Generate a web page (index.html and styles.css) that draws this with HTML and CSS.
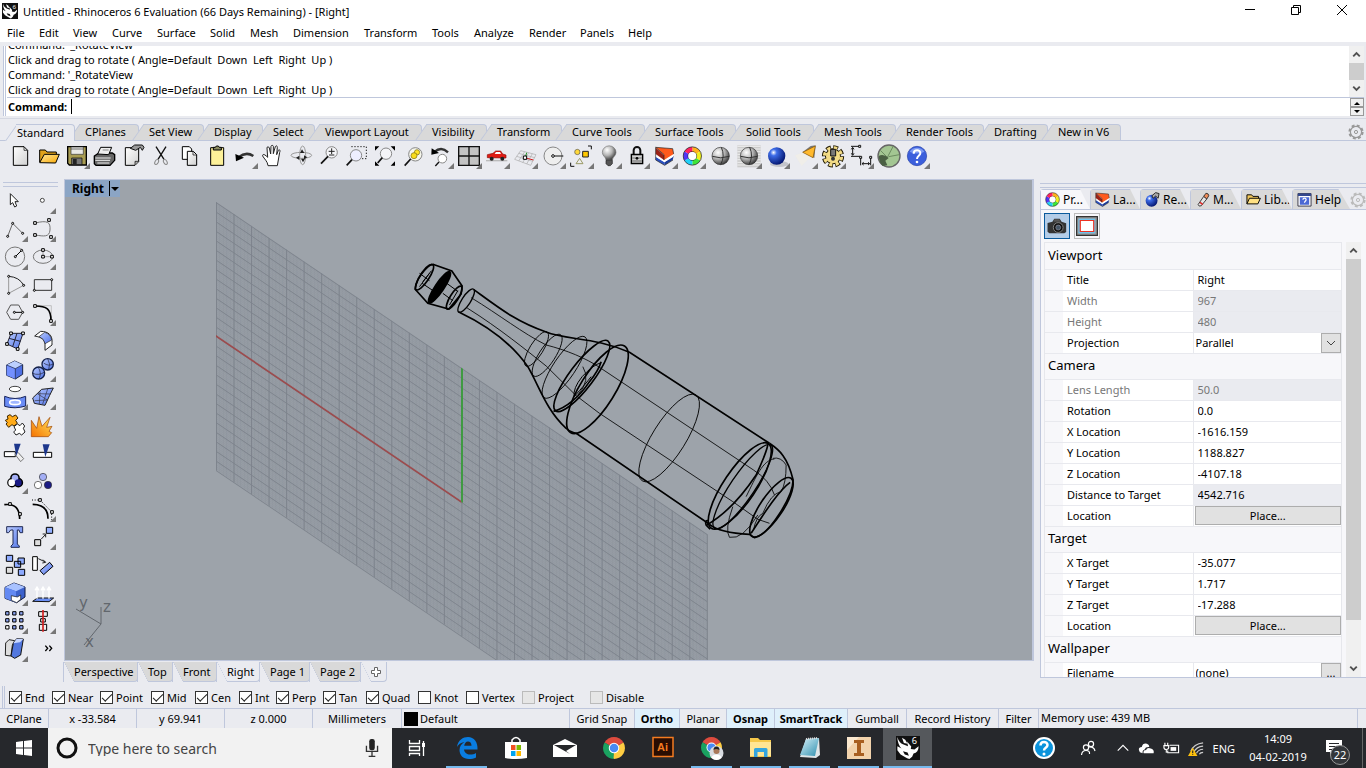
FILE: index.html
```html
<!DOCTYPE html>
<html lang="en">
<head>
<meta charset="utf-8">
<title>Untitled - Rhinoceros 6 Evaluation (66 Days Remaining) - [Right]</title>
<link rel="stylesheet" href="styles.css">
</head>
<body>
<svg class="defs" aria-hidden="true">
  <defs>
    <linearGradient id="page" x1="0" y1="0" x2="1" y2="1"><stop offset="0" stop-color="#fff"/><stop offset="1" stop-color="#d0d0d0"/></linearGradient>
    <linearGradient id="gold" x1="0" y1="0" x2="1" y2="1"><stop offset="0" stop-color="#ffe9a0"/><stop offset="1" stop-color="#fba800"/></linearGradient>
    <linearGradient id="blue" x1="0" y1="0" x2="1" y2="1"><stop offset="0" stop-color="#b9cbff"/><stop offset="1" stop-color="#4f72e8"/></linearGradient>
    <linearGradient id="fire" x1="1" y1="0" x2="0" y2="1"><stop offset="0" stop-color="#ffe45a"/><stop offset="1" stop-color="#f57200"/></linearGradient>
    <linearGradient id="aqua" x1="0" y1="0" x2="1" y2="1"><stop offset="0" stop-color="#d8f3fb"/><stop offset="1" stop-color="#2f8fae"/></linearGradient>
    <radialGradient id="ballGray" cx=".35" cy=".3" r=".75"><stop offset="0" stop-color="#fff"/><stop offset=".5" stop-color="#b5b5b5"/><stop offset="1" stop-color="#333"/></radialGradient>
    <radialGradient id="ballBlue" cx=".32" cy=".3" r=".75"><stop offset="0" stop-color="#fff"/><stop offset=".25" stop-color="#3d6ce8"/><stop offset="1" stop-color="#02146e"/></radialGradient>
    <symbol id="wheel" viewBox="0 0 60 60">
      <g fill="none" stroke-width="14">
        <path d="M30 10A20 20 0 0 1 47.300 20" stroke="#ffb01c"/><path d="M47.300 20A20 20 0 0 1 47.300 40" stroke="#f0f01c"/>
        <path d="M47.300 40A20 20 0 0 1 30 50" stroke="#3ee53a"/><path d="M30 50A20 20 0 0 1 12.700 40" stroke="#20d0f8"/>
        <path d="M12.700 40A20 20 0 0 1 12.700 20" stroke="#5136f6"/><path d="M12.700 20A20 20 0 0 1 30 10" stroke="#ff2060"/>
      </g>
      <g fill="none" stroke="#111" stroke-width="2"><circle cx="30" cy="30" r="27.500"/><circle cx="30" cy="30" r="13"/></g>
      <circle cx="30" cy="30" r="12" fill="#fff"/>
    </symbol>
    <symbol id="layers" viewBox="0 0 60 60">
      <path d="M3 32V42L30 58V48Z" fill="#2a50c0"/><path d="M30 48V58L54 42 57 30Z" fill="#1b3c9c"/>
      <path d="M3 24V32L29 49 55 33 57 24 28 41Z" fill="#fff"/>
      <path d="M3 5V24L28 42V28Z" fill="#9c2216"/><path d="M3 4 54 8 57 24 28 42V26Z" fill="#ff5a1c"/>
      <path d="M3 4 28 26V42M3 4V42L30 58 55 42M3 4 54 8 57 24" fill="none" stroke="#222" stroke-width="2"/>
    </symbol>
    <symbol id="gear" viewBox="0 0 40 40">
      <circle cx="20" cy="20" r="16" fill="none" stroke="currentColor" stroke-width="6" stroke-dasharray="7 5.570"/>
      <circle cx="20" cy="20" r="14" fill="none" stroke="currentColor" stroke-width="3"/>
      <circle cx="20" cy="20" r="4" fill="none" stroke="currentColor" stroke-width="2.500"/>
    </symbol>
    <symbol id="rhino" viewBox="0 0 52 52">
      <path fill="#111" d="M0 0H52V52H0Z"/>
      <path fill="#fff" d="M3 2C5 10 9 15 15 18L26 22 24 12 33 23 32 28 40 29 49 22C49 31 45 36 38 38L35 45 29 50 24 48 10 40 3 31V22L12 27C7 22 3 12 3 2ZM13 4 20 8 25 17 17 15Z"/>
      <path fill="#111" d="M15 33 25 36 28 43 19 40Z"/>
      <text x="34" y="18" class="six">6</text>
    </symbol>
    <symbol id="chrome" viewBox="0 0 44 44">
      <path fill="#dd4b3e" d="M22 22 3 11A22 22 0 0 1 41 11Z"/><path fill="#ffcd42" d="M22 22 41 11A22 22 0 0 1 22 44L20 42Z"/>
      <path fill="#1aa260" d="M22 22 21 44A22 22 0 0 1 3 11Z"/><circle cx="22" cy="22" r="10.500" fill="#fff"/><circle cx="22" cy="22" r="8.500" fill="#4a8af4"/>
    </symbol>
    <symbol id="up" viewBox="0 0 16 16"><path d="M4.500 10 8 6.500 11.500 10" fill="none" stroke="#505050" stroke-width="2"/></symbol>
    <symbol id="down" viewBox="0 0 16 16"><path d="M4.500 6 8 9.500 11.500 6" fill="none" stroke="#505050" stroke-width="2"/></symbol>
  </defs>
</svg>

<header class="titlebar">
  <svg class="app-icon" viewBox="0 0 52 52"><use href="#rhino"/></svg>
  <h1 class="title">Untitled - Rhinoceros 6 Evaluation (66 Days Remaining) - [Right]</h1>
  <div class="window-buttons">
    <button aria-label="Minimize"><svg viewBox="0 0 12 12"><path d="M1 5.500H11"/></svg></button>
    <button aria-label="Restore"><svg viewBox="0 0 12 12"><path d="M1.500 3.500H8.500V10.500H1.500ZM3.500 3.500V1.500H10.500V8.500H8.500"/></svg></button>
    <button aria-label="Close"><svg viewBox="0 0 12 12"><path d="M1 1 11 11M11 1 1 11"/></svg></button>
  </div>
</header>

<nav class="menubar" aria-label="Menu">
  <button>File</button><button>Edit</button><button>View</button><button>Curve</button><button>Surface</button><button>Solid</button><button>Mesh</button><button>Dimension</button><button>Transform</button><button>Tools</button><button>Analyze</button><button>Render</button><button>Panels</button><button>Help</button>
</nav>

<section class="command-area" aria-label="Command history">
  <div class="history">
    <div class="history-lines">
      <p>Command: '_RotateView</p>
      <p>Click and drag to rotate ( Angle=Default&nbsp; Down&nbsp; Left&nbsp; Right&nbsp; Up )</p>
      <p>Command: '_RotateView</p>
      <p>Click and drag to rotate ( Angle=Default&nbsp; Down&nbsp; Left&nbsp; Right&nbsp; Up )</p>
    </div>
    <div class="scroll"><svg><use href="#up"/></svg><i></i><svg><use href="#down"/></svg></div>
  </div>
  <div class="prompt">
    <label for="cmd">Command:</label><input id="cmd" type="text">
    <div class="spin"><button aria-label="Previous"><svg viewBox="0 0 12 6"><path d="M3 5 6 2 9 5Z"/></svg></button><button aria-label="Next"><svg viewBox="0 0 12 6"><path d="M3 1 6 4 9 1Z"/></svg></button></div>
  </div>
</section>

<div class="toolbar-tabs" role="tablist">
  <button role="tab" class="on" aria-selected="true">Standard</button><button role="tab">CPlanes</button><button role="tab">Set View</button><button role="tab">Display</button><button role="tab">Select</button><button role="tab">Viewport Layout</button><button role="tab">Visibility</button><button role="tab">Transform</button><button role="tab">Curve Tools</button><button role="tab">Surface Tools</button><button role="tab">Solid Tools</button><button role="tab">Mesh Tools</button><button role="tab">Render Tools</button><button role="tab">Drafting</button><button role="tab">New in V6</button>
  <svg class="gear-icon"><use href="#gear"/></svg>
</div>

<div class="toolbar">
  <button class="tool" aria-label="New"><svg viewBox="18 63 84 84"><path d="M40 80H72L83 91V136H40Z" fill="url(#page)" stroke="#000" stroke-width="3"/><path d="M72 80V91H83" fill="none" stroke="#000" stroke-width="2"/></svg></button>
  <button class="tool" aria-label="Open"><svg viewBox="102 63 84 84"><path d="M119 126V90H136L141 96H169V104" fill="#e0a21a" stroke="#000" stroke-width="3"/><path d="M119 128 133 103H178L167 129Z" fill="url(#gold)" stroke="#000" stroke-width="3"/></svg></button>
  <button class="tool more" aria-label="Save"><svg viewBox="186 63 84 84"><path d="M203 80H259V135H208L203 130Z" fill="#a89c52" stroke="#000" stroke-width="4"/><path d="M213 81H250V103H213Z" fill="#e9e9e6" stroke="#333" stroke-width="2"/><path d="M213 87H250" stroke="#333" stroke-width="2"/><path d="M215 114H246V134H215Z" fill="#777" stroke="#000" stroke-width="2"/><path d="M219 117H230V133H219Z" fill="#222"/></svg></button>
  <button class="tool" aria-label="Print"><svg viewBox="270 63 84 84"><path d="M283 108 297 99H337L344 104V121L330 136H288L283 131Z" fill="#666" stroke="#000" stroke-width="4"/><path d="M293 102 302 82H335L326 104Z" fill="#eee" stroke="#000" stroke-width="3"/><path d="M286 114H332M286 121H330M292 129H328" stroke="#eee" stroke-width="3"/><path d="M308 90H326" stroke="#888" stroke-width="3"/></svg></button>
  <button class="tool" aria-label="Properties"><svg viewBox="354 63 84 84"><path d="M376 83H416V125L405 136H376Z" fill="url(#page)" stroke="#000" stroke-width="3"/><path d="M405 135V124H416" fill="#aaa" stroke="#000" stroke-width="2"/><path d="M391 85 404 75H427L432 82 427 91 421 82 407 91Z" fill="#999" stroke="#111" stroke-width="3"/></svg></button>
  <button class="tool" aria-label="Cut"><svg viewBox="438 63 84 84"><path d="M468 80 492 118M498 80 474 118" stroke="#111" stroke-width="4"/><g fill="none" stroke="#888" stroke-width="3"><ellipse cx="470" cy="126" rx="5" ry="8" transform="rotate(30 470 126)"/><ellipse cx="496" cy="126" rx="5" ry="8" transform="rotate(-30 496 126)"/></g></svg></button>
  <button class="tool" aria-label="Copy"><svg viewBox="522 63 84 84"><path d="M547 80H568L575 87V118H547Z" fill="#fff" stroke="#000" stroke-width="3"/><path d="M562 94H580L590 104V136H562Z" fill="url(#page)" stroke="#000" stroke-width="3"/><path d="M579 94V105H590" fill="none" stroke="#000" stroke-width="2"/></svg></button>
  <button class="tool" aria-label="Paste"><svg viewBox="606 63 84 84"><path d="M632 83H671V136H632Z" fill="#fdf199" stroke="#000" stroke-width="3"/><path d="M640 90V82H646L649 78H655L658 82H664V90Z" fill="#8a8a60" stroke="#000" stroke-width="3"/></svg></button>
  <button class="tool more" aria-label="Undo"><svg viewBox="690 63 84 84"><path d="M716 112Q738 94 760 108" fill="none" stroke="#333" stroke-width="8"/><path d="M706 102 732 113 708 124Z"/></svg></button>
  <button class="tool" aria-label="Pan"><svg viewBox="774 63 84 84"><path d="M804 137C803 124 792 116 788 108 787 101 794 102 803 112L801 84C801 79 806 79 808 84L812 102 813 79C814 75 819 75 820 79V101L826 80C828 76 832 77 832 82L830 104 835 91C838 87 842 91 839 97L832 137Z" fill="#fff" stroke="#222" stroke-width="3"/></svg></button>
  <button class="tool" aria-label="Rotate View"><svg viewBox="858 63 84 84"><g fill="none" stroke="#999" stroke-width="3"><ellipse cx="904" cy="106" rx="31" ry="9"/><ellipse cx="908" cy="106" rx="9" ry="28"/></g><path d="M888 113 898 107V120ZM906 88 900 99H913ZM922 112 912 118V106ZM909 127 903 116H915Z" fill="#222"/></svg></button>
  <button class="tool" aria-label="Zoom Dynamic"><svg viewBox="942 63 84 84"><circle cx="995" cy="97" r="17" fill="#fff" fill-opacity=".5" stroke="#888" stroke-width="3"/><path d="M984 109 963 131" stroke="#111" stroke-width="5"/><path d="M986 94H1004M995 85V102M987 105H1003" stroke="#222" stroke-width="3"/></svg></button>
  <button class="tool" aria-label="Zoom Window"><svg viewBox="1026 63 84 84"><path d="M1054 80H1099V116H1080" fill="none" stroke="#222" stroke-width="3" stroke-dasharray="4 5"/><circle cx="1068" cy="106" r="17" fill="#eef" stroke="#888" stroke-width="3"/><path d="M1056 119 1040 136" stroke="#111" stroke-width="5"/></svg></button>
  <button class="tool" aria-label="Zoom Extents"><svg viewBox="1110 63 84 84"><circle cx="1158" cy="101" r="17" fill="#fff" fill-opacity=".5" stroke="#888" stroke-width="3"/><path d="M1147 113 1133 129" stroke="#111" stroke-width="5"/><path d="M1125 79H1138L1125 92ZM1185 79H1172L1185 92ZM1125 137V124L1138 137ZM1185 137V124L1172 137Z"/></svg></button>
  <button class="tool" aria-label="Zoom Selected"><svg viewBox="1194 63 84 84"><circle cx="1246" cy="103" r="20" fill="#f6f6ec" stroke="#888" stroke-width="3"/><path d="M1232 117 1214 137" stroke="#111" stroke-width="5"/><circle cx="1251" cy="97" r="8" fill="#ffe324" stroke="#7a6a10" stroke-width="2"/><circle cx="1242" cy="107" r="9" fill="#f8dc1c" stroke="#7a6a10" stroke-width="2"/></svg></button>
  <button class="tool more" aria-label="Undo View"><svg viewBox="1278 63 84 84"><path d="M1303 96Q1324 78 1344 97" fill="none" stroke="#333" stroke-width="7"/><path d="M1295 85 1317 99 1294 104Z"/><circle cx="1327" cy="116" r="13" fill="#fff" stroke="#888" stroke-width="3"/><path d="M1317 126 1306 138" stroke="#111" stroke-width="4"/></svg></button>
  <button class="tool more" aria-label="4 View"><svg viewBox="1362 63 84 84"><path d="M1376 80H1438V136H1376Z" fill="#c3c3c3" stroke="#111" stroke-width="4"/><path d="M1407 80V136M1376 108H1438" stroke="#111" stroke-width="4"/></svg></button>
  <button class="tool more" aria-label="Named View"><svg viewBox="36 63 84 84"><path d="M48 122H112" stroke="#bbb" stroke-width="4"/><path d="M52 113V104L69 100 77 93H92L98 102 108 105V114Z" fill="#e01c14" stroke="#8c0a08" stroke-width="2"/><path d="M78 96H90L93 102H74Z" fill="#fff"/><circle cx="65" cy="116" r="6" fill="#222"/><circle cx="97" cy="116" r="6" fill="#222"/></svg></button>
  <button class="tool more" aria-label="CPlane"><svg viewBox="120 63 84 84"><path d="M152 92 198 104 182 136 134 118ZM146 100 194 113M140 109 188 124M164 95 146 123M176 98 158 128M187 101 170 132" fill="none" stroke="#aaa" stroke-width="2"/><path d="M166 113 170 98" stroke="#189018" stroke-width="3"/><path d="M168 114 190 120" stroke="#d01818" stroke-width="3"/><path d="M160 108H170V118H160Z" fill="#fff" stroke="#000" stroke-width="3"/></svg></button>
  <button class="tool more" aria-label="Set CPlane"><svg viewBox="204 63 84 84"><circle cx="249" cy="108" r="27" fill="#eee" stroke="#888" stroke-width="3"/><path d="M250 108H280" stroke="#111" stroke-width="3"/><circle cx="249" cy="108" r="4" fill="#fff" stroke="#111" stroke-width="3"/></svg></button>
  <button class="tool more" aria-label="Object Snap"><svg viewBox="288 63 84 84"><path d="M354 78H364V88M302 128V139H313" fill="none" stroke="#111" stroke-width="3"/><circle cx="322" cy="96" r="8" fill="#ffd83a" stroke="#555" stroke-width="2"/><path d="M338 94H355V111H338Z" fill="#ffc800" stroke="#222" stroke-width="3"/><path d="M329 115 339 131H318Z" fill="#eee" stroke="#996" stroke-width="3"/></svg></button>
  <button class="tool more" aria-label="Hide"><svg viewBox="372 63 84 84"><path d="M408 120C407 110 397 108 397 97A20 19 0 0 1 438 97C438 108 428 110 427 120Z" fill="url(#ballGray)" stroke="#777" stroke-width="2"/><path d="M408 121H427V131L421 137H414L408 131Z" fill="#555" stroke="#222" stroke-width="2"/></svg></button>
  <button class="tool more" aria-label="Lock"><svg viewBox="456 63 84 84"><path d="M491 104V91A10 10 0 0 1 511 91V104" fill="none" stroke="#111" stroke-width="6"/><path d="M484 103H518V131H484Z" fill="#999" stroke="#000" stroke-width="4"/><path d="M487 110H515M487 118H515" stroke="#ddd" stroke-width="3"/><circle cx="501" cy="115" r="4"/></svg></button>
  <button class="tool more" aria-label="Layers"><svg viewBox="540 63 84 84"><use href="#layers" x="554" y="78" width="60" height="60"/></svg></button>
  <button class="tool more" aria-label="Object Properties"><svg viewBox="624 63 84 84"><use href="#wheel" x="637" y="78" width="60" height="60"/></svg></button>
  <button class="tool" aria-label="Shaded Viewport"><svg viewBox="708 63 84 84"><circle cx="752" cy="108" r="26" fill="url(#ballGray)" stroke="#333" stroke-width="2"/><path d="M727 109Q752 118 778 109M754 82Q766 108 752 134" fill="none" stroke="#333" stroke-width="3"/></svg></button>
  <button class="tool more" aria-label="Rendered Viewport"><svg viewBox="792 63 84 84"><path d="M802 76H872V142H802Z" fill="#ccc"/><path d="M802 79H872M802 87H872M802 95H872M802 103H872M802 111H872M802 119H872M802 127H872M802 135H872" stroke="#eee" stroke-width="3"/><circle cx="837" cy="108" r="26" fill="url(#ballGray)" stroke="#333" stroke-width="2"/><path d="M812 109Q837 118 862 109M839 82Q851 108 837 134" fill="none" stroke="#333" stroke-width="3"/></svg></button>
  <button class="tool more" aria-label="Render"><svg viewBox="876 63 84 84"><ellipse cx="928" cy="132" rx="28" ry="9" fill="#c4c5cb"/><circle cx="920" cy="108" r="26" fill="url(#ballBlue)"/></svg></button>
  <button class="tool more" aria-label="Spotlight"><svg viewBox="960 63 84 84"><path d="M998 96 1022 78 1037 76 1033 114Z" fill="#777"/><path d="M998 97 1036 78 1029 113Z" fill="#ffb92e" stroke="#885400" stroke-width="2"/><path d="M975 106 998 98 1020 112 995 138Z" fill="#f5f1e2" opacity=".5"/></svg></button>
  <button class="tool more" aria-label="Options"><svg viewBox="1044 63 84 84"><circle cx="1089" cy="109" r="24" fill="#1c1600"/><circle cx="1089" cy="109" r="27" fill="none" stroke="#1c1600" stroke-width="13" stroke-dasharray="14 7.200"/><circle cx="1089" cy="109" r="25" fill="none" stroke="#f3dc86" stroke-width="11" stroke-dasharray="9.600 10.030" stroke-dashoffset="-1.700"/><circle cx="1089" cy="109" r="21" fill="#f3dc86"/><path d="M1082 88H1097V108H1082Z" fill="#777" stroke="#111" stroke-width="3"/><circle cx="1089" cy="116" r="6" fill="#333"/></svg></button>
  <button class="tool more" aria-label="Dimension"><svg viewBox="1128 63 84 84"><path d="M1143 79H1168M1143 109H1170M1148 84V104M1144 88 1148 82 1152 88M1144 100 1148 106 1152 100M1172 112V136M1202 112V136M1177 131H1198M1181 127 1176 131 1181 135M1194 127 1199 131 1194 135" fill="none" stroke="#111" stroke-width="3"/><path d="M1166 76H1172V82H1166ZM1169 109H1175V115H1169ZM1199 109H1205V115H1199Z" fill="#fff" stroke="#111" stroke-width="3"/></svg></button>
  <button class="tool" aria-label="Grasshopper"><svg viewBox="1212 63 84 84"><circle cx="1257" cy="108" r="33" fill="#a3c692" stroke="#666" stroke-width="4"/><path d="M1232 92 1252 112 1270 78M1256 110 1288 104" fill="none" stroke="#6c8c60" stroke-width="3"/><path d="M1226 108Q1240 100 1256 114L1246 122 1252 136 1238 138Q1228 130 1226 108Z" fill="#4a6043"/></svg></button>
  <button class="tool more" aria-label="Help"><svg viewBox="1296 63 84 84"><circle cx="1341" cy="108" r="29" fill="#3c5fdc" stroke="#2440a8" stroke-width="2"/><path d="M1319 95A25 22 0 0 1 1363 95Q1341 106 1319 95Z" fill="#7d9af2"/><path d="M1331 101C1331 87 1352 88 1351 100 1350 108 1341 107 1341 117" fill="none" stroke="#fff" stroke-width="6"/><circle cx="1341" cy="126" r="4" fill="#fff"/></svg></button>
</div>

<main class="workspace">
  <div class="sidebar">
    <button class="tool" aria-label="Select"><svg viewBox="0 18 84 84"><path d="M31 41V74L38 68 44 81 50 78 45 65H55Z" fill="#fff" stroke="#222" stroke-width="3"/></svg></button>
    <button class="tool more" aria-label="Point"><svg viewBox="84 18 84 84"><circle cx="127" cy="61" r="6" fill="#fff" stroke="#444" stroke-width="3"/></svg></button>
    <button class="tool more" aria-label="Polyline"><svg viewBox="0 102 84 84"><path d="M23 169 38 130 68 160" fill="none" stroke="#666" stroke-width="3"/><g fill="#fff" stroke="#000" stroke-width="3"><circle cx="23" cy="169" r="3"/><circle cx="38" cy="130" r="3"/><circle cx="68" cy="160" r="3"/></g></svg></button>
    <button class="tool more" aria-label="Curve"><svg viewBox="84 102 84 84"><path d="M106 129C142 120 152 126 150 150 148 172 132 169 106 165" fill="none" stroke="#777" stroke-width="3"/><path d="M101 125H109V133H101ZM143 116H151V124H143ZM101 161H109V169H101ZM149 167H157V175H149Z" fill="#fff" stroke="#000" stroke-width="3"/></svg></button>
    <button class="tool more" aria-label="Circle"><svg viewBox="0 186 84 84"><circle cx="45" cy="230" r="29" fill="none" stroke="#777" stroke-width="3"/><path d="M46 230 65 211" stroke="#000" stroke-width="3"/><g fill="#fff" stroke="#000" stroke-width="3"><circle cx="46" cy="230" r="3"/><circle cx="65" cy="211" r="3"/></g></svg></button>
    <button class="tool more" aria-label="Ellipse"><svg viewBox="84 186 84 84"><ellipse cx="129" cy="230" rx="29" ry="20" fill="none" stroke="#777" stroke-width="3"/><path d="M129 210V230H157" fill="none" stroke="#777" stroke-width="2"/><path d="M125 206H133V214H125ZM125 226H133V234H125ZM152 226H160V234H152Z" fill="#fff" stroke="#000" stroke-width="3"/></svg></button>
    <button class="tool more" aria-label="Arc"><svg viewBox="0 270 84 84"><path d="M26 289V340L71 316" fill="none" stroke="#999" stroke-width="3"/><path d="M26 289Q58 291 71 316" fill="none" stroke="#222" stroke-width="3"/><g fill="#fff" stroke="#000" stroke-width="3"><circle cx="26" cy="289" r="3"/><circle cx="26" cy="340" r="3"/><circle cx="71" cy="316" r="3"/></g></svg></button>
    <button class="tool more" aria-label="Rectangle"><svg viewBox="84 270 84 84"><path d="M103 299H155V331H103Z" fill="none" stroke="#333" stroke-width="3"/><g fill="#fff" stroke="#000" stroke-width="3"><circle cx="103" cy="331" r="3"/><circle cx="155" cy="299" r="3"/></g></svg></button>
    <button class="tool more" aria-label="Polygon"><svg viewBox="0 354 84 84"><path d="M32 375H56L68 397 56 418H32L20 397Z" fill="none" stroke="#555" stroke-width="3"/><path d="M43 397H68" stroke="#000" stroke-width="3"/><g fill="#fff" stroke="#000" stroke-width="3"><circle cx="43" cy="397" r="3"/><circle cx="68" cy="397" r="3"/></g></svg></button>
    <button class="tool more" aria-label="Fillet"><svg viewBox="84 354 84 84"><path d="M109 377H154V420" fill="none" stroke="#aaa" stroke-width="2"/><path d="M105 378C140 378 153 386 153 423" fill="none" stroke="#000" stroke-width="5"/><path d="M101 374H109V382H101ZM149 419H157V427H149Z" fill="#fff" stroke="#000" stroke-width="3"/></svg></button>
    <button class="tool more" aria-label="Surface"><svg viewBox="0 438 84 84"><path d="M33 460H69L53 507 21 492Z" fill="url(#blue)" stroke="#223" stroke-width="3"/><path d="M51 460 38 500M27 475 61 484" stroke="#223" stroke-width="3"/><path d="M29 456H37V464H29ZM65 456H73V464H65ZM17 488H25V496H17ZM49 503H57V511H49Z" fill="#fff" stroke="#000" stroke-width="3"/></svg></button>
    <button class="tool more" aria-label="Sweep"><svg viewBox="84 438 84 84"><path d="M104 468 122 454C145 454 158 466 156 487V495L135 511V492C134 478 126 472 104 468Z" fill="#fff" stroke="#222" stroke-width="3"/><path d="M117 470 134 457Q152 462 155 480L135 491Q132 475 117 470Z" fill="url(#blue)" stroke="#222" stroke-width="2"/></svg></button>
    <button class="tool more" aria-label="Box"><svg viewBox="0 522 84 84"><path d="M20 555 44 543 68 554V583L46 597 20 586Z" fill="#4f70e4" stroke="#1a2340" stroke-width="3"/><path d="M20 555 44 543 68 554 46 566Z" fill="#bcd0ff"/><path d="M20 555 46 566V597L20 586Z" fill="#7390ff"/><path d="M20 555 46 566 68 554M46 566V597" fill="none" stroke="#1a2340" stroke-width="2"/></svg></button>
    <button class="tool more" aria-label="Boolean Union"><svg viewBox="84 522 84 84"><g fill="url(#blue)" stroke="#12204a" stroke-width="4"><circle cx="143" cy="553" r="17"/><circle cx="116" cy="579" r="18"/></g><path d="M98 580Q116 588 134 576M114 561Q126 578 117 597M131 549Q145 560 160 552M143 536Q153 552 146 569" fill="none" stroke="#223" stroke-width="2"/></svg></button>
    <button class="tool more" aria-label="Project"><svg viewBox="0 606 84 84"><ellipse cx="45" cy="627" rx="17" ry="8" fill="#fff" stroke="#444" stroke-width="3"/><path d="M14 649Q45 662 77 649V678Q45 688 14 679Z" fill="#6a8cf5" stroke="#16225a" stroke-width="3"/><ellipse cx="45" cy="667" rx="16" ry="7" fill="#9fb6ff" stroke="#fff" stroke-width="5"/></svg></button>
    <button class="tool more" aria-label="Mesh"><svg viewBox="84 606 84 84"><path d="M98 654 125 628 160 624 149 646 135 676 103 670Z" fill="url(#blue)" stroke="#222" stroke-width="3"/><path d="M112 641 151 642M104 662 142 660M120 634 118 672M143 627 128 672M112 641 142 660" fill="none" stroke="#334" stroke-width="2"/></svg></button>
    <button class="tool" aria-label="Join"><svg viewBox="0 0 84 84"><path d="M16 31 24 27 22 18 30 14 37 20 47 15 54 24 47 31 52 40 42 48 36 44 26 52 18 42 22 38Z" fill="#ffab1a" stroke="#3a2400" stroke-width="3"/><path d="M42 50 52 42 60 47 67 39 74 48 70 55 75 66 65 75 58 70 48 75 41 66 47 60Z" fill="#fff" stroke="#222" stroke-width="3"/></svg></button>
    <button class="tool" aria-label="Explode"><svg viewBox="84 0 84 84"><path d="M94 80V31L110 55 117 20 126 49 150 22 140 52 156 49 147 64 155 68 145 80Z" fill="url(#fire)" stroke="#9c4000" stroke-width="2"/></svg></button>
    <button class="tool" aria-label="Trim"><svg viewBox="0 84 84 84"><path d="M13 125H46V140H13Z" fill="#fff" stroke="#000" stroke-width="3"/><path d="M45 133 54 127 71 146 62 155Z" fill="#eee" stroke="#777" stroke-width="3"/><path d="M42 101H62L49 138Z" fill="#1d378c"/></svg></button>
    <button class="tool" aria-label="Split"><svg viewBox="84 84 84 84"><path d="M100 127H155V142H100Z" fill="#fff" stroke="#000" stroke-width="3"/><path d="M128 103H149L136 141Z" fill="#1d378c"/></svg></button>
    <button class="tool more" aria-label="Group"><svg viewBox="0 168 84 84"><g stroke="#000" stroke-width="13"><circle cx="45" cy="204" r="8"/><circle cx="36" cy="218" r="8"/><circle cx="55" cy="218" r="8"/></g><circle cx="45" cy="204" r="10" fill="#a3aef5"/><circle cx="35" cy="218" r="10" fill="#fff"/><circle cx="55" cy="218" r="10" fill="#1b1b85"/></svg></button>
    <button class="tool" aria-label="Ungroup"><svg viewBox="84 168 84 84"><g stroke="#333" stroke-width="2"><circle cx="129" cy="201" r="11" fill="#a3aef5"/><circle cx="114" cy="225" r="11" fill="#fff"/><circle cx="144" cy="225" r="11" fill="#1b1b85"/></g></svg></button>
    <button class="tool" aria-label="Edit Points"><svg viewBox="0 252 84 84"><path d="M13 284C45 280 59 296 59 327" fill="none" stroke="#000" stroke-width="5"/><path d="M26 278H34V286H26ZM56 308H64V316H56Z" fill="#fff" stroke="#000" stroke-width="3"/></svg></button>
    <button class="tool more" aria-label="Control Points"><svg viewBox="84 252 84 84"><path d="M98 283C130 283 144 300 144 326" fill="none" stroke="#000" stroke-width="5"/><path d="M96 270H120L155 306V330" fill="none" stroke="#000" stroke-width="3" stroke-dasharray="3 5"/><path d="M116 266H124V274H116ZM152 302H160V310H152Z" fill="#fff" stroke="#000" stroke-width="3"/></svg></button>
    <button class="tool" aria-label="Text"><svg viewBox="0 336 84 84"><path d="M20 350H68V368H60L57 360H52V402L58 408V412H33V408L39 402V360H32L26 368H20Z" fill="url(#blue)" stroke="#222b55" stroke-width="3"/></svg></button>
    <button class="tool more" aria-label="Move"><svg viewBox="84 336 84 84"><path d="M139 352H158V370H139Z" fill="#94b0ff" stroke="#000" stroke-width="3"/><path d="M104 389H122V407H104Z" fill="#ddd" stroke="#000" stroke-width="3"/><path d="M124 387 136 374M128 372H137V382" fill="none" stroke="#222" stroke-width="3"/></svg></button>
    <button class="tool" aria-label="Copy Objects"><svg viewBox="0 420 84 84"><g fill="#8eabff" stroke="#000" stroke-width="3"><path d="M19 436H38V454H19ZM54 444H73V462H54ZM55 478H74V496H55ZM43 454H62V472H43Z"/><path d="M19 472H38V490H19Z" fill="#ddd"/></g></svg></button>
    <button class="tool" aria-label="Rotate"><svg viewBox="84 420 84 84"><path d="M98 440H112V481H98Z" fill="#fff" stroke="#000" stroke-width="3"/><path d="M120 482 149 457 159 469 131 494Z" fill="url(#blue)" stroke="#000" stroke-width="3"/><path d="M115 446 136 456M129 449 137 457 127 459" fill="none" stroke="#222" stroke-width="3"/></svg></button>
    <button class="tool more" aria-label="Solid Tools"><svg viewBox="0 504 84 84"><path d="M15 532 42 519 75 531V561L50 578 15 565Z" fill="#3d62cc" stroke="#111a40" stroke-width="3"/><path d="M15 532 42 519 75 531 48 544Z" fill="#a9c2ff"/><path d="M15 532 48 544V578L15 565Z" fill="#6389f2"/><path d="M34 557 52 561 62 555V568L50 578 34 571Z" fill="#fff" stroke="#111" stroke-width="2"/></svg></button>
    <button class="tool more" aria-label="Extrude"><svg viewBox="84 504 84 84"><path d="M98 574 112 564H161L147 575Z" fill="#6a8ff5" stroke="#111" stroke-width="3"/><path d="M111 566V532M129 566V532M147 566V532M105 541 111 531 117 541M123 541 129 531 135 541M141 541 147 531 153 541" fill="none" stroke="#fff" stroke-width="4"/></svg></button>
    <button class="tool more" aria-label="Array"><svg viewBox="0 588 84 84"><g fill="#8ea6f5" stroke="#000" stroke-width="3"><path d="M17 605H27V615H17ZM38 605H48V615H38ZM59 605H69V615H59ZM17 626H27V636H17ZM38 626H48V636H38ZM59 626H69V636H59ZM38 647H48V657H38ZM59 647H69V657H59Z"/><path d="M17 647H27V657H17Z" fill="#fff"/></g></svg></button>
    <button class="tool more" aria-label="Align"><svg viewBox="84 588 84 84"><path d="M116 605H142V619H116ZM122 626H136V636H122ZM118 643H140V661H118Z" fill="#eee" stroke="#000" stroke-width="3"/><path d="M129 600V665" stroke="#d42020" stroke-width="5"/></svg></button>
    <button class="tool more" aria-label="Flow"><svg viewBox="0 672 84 84"><path d="M17 699 27 689 44 692 37 706 33 738 16 736Z" fill="#ddd" stroke="#222" stroke-width="3"/><path d="M50 686 70 687 62 735 44 745 33 738 40 700Z" fill="#5378df" stroke="#111" stroke-width="3"/><path d="M50 686 70 687 60 697 40 700Z" fill="#c7d6ff"/></svg></button>
    <button class="tool" aria-label="More tools"><svg viewBox="84 672 84 84"><path d="M136 707 143 715 136 723M148 707 155 715 148 723" fill="none" stroke="#000" stroke-width="4"/></svg></button>
  </div>

  <section class="viewport-column">
    <div class="viewport">
      <svg class="scene" viewBox="65 180 967 480" preserveAspectRatio="xMinYMin slice">
        <g transform="matrix(1 .676 0 1 216 202)" fill="none">
          <path d="M0 0H491V268H0Z" fill="#979da5"/>
          <path d="M0 134H491" stroke="#858b94" stroke-width="268" stroke-dasharray=".5 3.006" opacity=".35"/>
          <path d="M245.500 0V268" stroke="#858b94" stroke-width="491" stroke-dasharray=".5 1.414" opacity=".35"/>
          <path d="M0 134H492" stroke="#7e848d" stroke-width="268" stroke-dasharray="1 16.530"/>
          <path d="M245.500 0V269" stroke="#7e848d" stroke-width="491" stroke-dasharray="1 8.570"/>
          <path d="M0 134H245.500" stroke="#9c4b4d" stroke-width="2"/>
          <path d="M246 0V134" stroke="#3f9a42" stroke-width="2"/>
        </g>
        <g transform="translate(399.500 250) scale(.3333)" fill="none" stroke="#000" stroke-width="5">
          <path d="M100 43 157 63 188 108 185 132 148 177 85 160 47 118Q50 85 80 53 92 40 102 44"/>
          <ellipse cx="75" cy="82" rx="13" ry="45" transform="rotate(34 75 82)"/>
          <ellipse cx="164" cy="143" rx="12" ry="40" transform="rotate(32 164 143)"/>
          <ellipse cx="120" cy="112" rx="13" ry="56" transform="rotate(34 120 112)" fill="#000"/>
          <path d="M60 70 90 92M68 100 105 125M135 95 176 125M130 130 160 152M90 70 60 110M96 62 70 95M175 122 150 165" stroke-width="3"/>
          <ellipse cx="200" cy="152" rx="13" ry="41" transform="rotate(33 200 152)" stroke-width="4"/>
          <path d="M223 119C300 175 350 215 440 246 500 270 590 262 690 307L1110 580"/>
          <path d="M178 186C270 230 340 285 385 350 420 410 440 480 500 535 510 547 520 546 530 550L930 823"/>
          <path d="M1110 580C1140 600 1165 622 1181 690C1180 740 1110 855 1065 863L1050 853Q960 848 930 823"/>
          <ellipse cx="547" cy="378" rx="36" ry="131" transform="rotate(37 547 378)"/>
          <ellipse cx="594" cy="418" rx="52" ry="153" transform="rotate(32 594 418)"/>
          <path d="M462 484C500 475 540 440 570 395 590 370 600 352 605 335"/>
          <path d="M524 440Q520 415 548 380 580 345 605 338M524 440Q560 400 575 380" stroke-width="3"/>
          <g stroke-width="2.500">
            <ellipse cx="411" cy="297" rx="20" ry="60" transform="rotate(32 411 297)"/>
            <ellipse cx="443" cy="316" rx="24" ry="74" transform="rotate(33 443 316)"/>
            <ellipse cx="495" cy="352" rx="33" ry="110" transform="rotate(34 495 352)"/>
            <ellipse cx="809" cy="564" rx="50" ry="152" transform="rotate(32 809 564)"/>
            <path d="M550 350Q575 390 535 435"/>
            <path d="M215 143C300 195 370 250 440 285 500 300 560 325 600 352L1062 660Q1110 690 1125 735"/>
            <path d="M203 174C300 235 380 300 440 348L530 437 600 490 1000 755 1075 808 1110 820"/>
            <path d="M1000 770Q975 840 990 862 1030 870 1075 795M1120 625Q1145 620 1160 645 1160 700 1145 725 1115 730 1090 790 1070 800 1062 840M1040 740C1070 680 1090 630 1125 627"/>
          </g>
          <ellipse cx="1021" cy="708" rx="48" ry="153" transform="rotate(34 1021 708)"/>
          <ellipse cx="1030" cy="710" rx="36" ry="151" transform="rotate(34 1030 710)" stroke-width="4"/>
          <path d="M922 825Q1000 780 1070 675 1100 610 1105 585" stroke-width="5"/>
          <ellipse cx="1116" cy="772" rx="34" ry="105" transform="rotate(34 1116 772)"/>
          <path d="M1055 850C1100 780 1140 720 1172 697M932 838 920 825Q915 810 927 812"/>
        </g>
        <path d="M76 609 101 624V607M101 624 84 645" fill="none" stroke="#62676d" stroke-width="1"/>
        <g class="axis-labels"><text x="79" y="608">y</text><text x="103" y="612">z</text><text x="85" y="647">x</text></g>
      </svg>
      <button class="viewport-title"><b>Right</b><span><svg viewBox="0 0 10 10"><path d="M1 3H9L5 7Z"/></svg></span></button>
    </div>
    <div class="view-tabs" role="tablist">
      <button role="tab">Perspective</button><button role="tab">Top</button><button role="tab">Front</button><button role="tab" class="on" aria-selected="true">Right</button><button role="tab">Page 1</button><button role="tab">Page 2</button>
      <button class="on add" aria-label="Add page"><svg viewBox="0 0 10 10"><path d="M3.500 .5H6.500V3.500H9.500V6.500H6.500V9.500H3.500V6.500H.5V3.500H3.500Z" fill="#fff" stroke="#666"/></svg></button>
    </div>
  </section>

  <aside class="panel">
    <div class="panel-tabs" role="tablist">
      <button role="tab" class="on" aria-selected="true"><svg><use href="#wheel"/></svg>Pr...</button>
      <button role="tab"><svg><use href="#layers"/></svg>La...</button>
      <button role="tab"><svg viewBox="0 0 48 48"><circle cx="21" cy="28" r="19" fill="url(#ballBlue)"/><path d="M22 12 34 2 45 5 42 20 34 13 26 20Z" fill="#aaa" stroke="#222" stroke-width="3"/></svg>Re...</button>
      <button role="tab"><svg viewBox="0 0 48 48"><path d="M10 40 28 14 38 22 20 44Q12 48 10 40Z" fill="#e6e6e6" stroke="#333" stroke-width="3"/><path d="M28 14 35 4Q44 4 44 12L38 22Z" fill="#f08c58" stroke="#333" stroke-width="3"/><path d="M16 33 25 40" stroke="#d22" stroke-width="5"/></svg>M...</button>
      <button role="tab"><svg viewBox="0 0 48 48"><path d="M3 38V9H18L22 14H40V22" fill="#f4c95c" stroke="#000" stroke-width="3"/><path d="M3 38 11 20H46L38 38Z" fill="#ffe184" stroke="#000" stroke-width="3"/></svg>Lib...</button>
      <button role="tab"><svg viewBox="0 0 48 48"><path d="M3 5H45V45H3Z" fill="#fff" stroke="#334" stroke-width="3"/><path d="M3 5H45V13H3Z" fill="#34488e"/><path d="M9 17H39V41H9Z" fill="#4a68d4"/><path d="M19 25C19 18 30 18 29 25 28 30 24 29 24 34" fill="none" stroke="#fff" stroke-width="4"/></svg>Help</button>
      <svg class="gear-icon faded"><use href="#gear"/></svg>
    </div>
    <div class="panel-body">
      <div class="panel-modes">
        <button class="on" aria-label="Viewport properties"><svg viewBox="0 0 72 72"><path d="M5 26 21 22 27 12H45L51 22 66 27V56L60 60H11L5 55Z" fill="#333"/><path d="M28 14H44L47 22H25Z" fill="#555"/><circle cx="40" cy="41" r="16" fill="#111" stroke="#888" stroke-width="3"/><circle cx="40" cy="41" r="8" fill="#456" stroke="#99a" stroke-width="2"/></svg></button>
        <button aria-label="Frame"><svg viewBox="0 0 72 72"><path d="M2 5H70V67H2Z" fill="#999" stroke="#333" stroke-width="4"/><path d="M8 12H63V60H8Z" fill="#6cc4ef"/><path d="M14 18H58V54H14Z" fill="#fff" stroke="#e32" stroke-width="4"/></svg></button>
      </div>
      <div class="prop-area">
        <div class="prop-scroll">
          <table class="props">
            <colgroup><col class="c-indent"><col class="c-label"><col></colgroup>
            <tbody>
              <tr class="group"><th colspan="3">Viewport</th></tr>
              <tr><td></td><th><label for="p1">Title</label></th><td><input id="p1" value="Right"></td></tr>
              <tr class="off"><td></td><th><label for="p2">Width</label></th><td><input id="p2" value="967" disabled></td></tr>
              <tr class="off"><td></td><th><label for="p3">Height</label></th><td><input id="p3" value="480" disabled></td></tr>
              <tr><td></td><th><label for="p4">Projection</label></th><td><div class="combo"><select id="p4"><option>Parallel</option><option>Perspective</option></select><span><svg viewBox="0 0 12 12"><path d="M2 4 6 8 10 4" fill="none" stroke="#444"/></svg></span></div></td></tr>
              <tr class="group"><th colspan="3">Camera</th></tr>
              <tr class="off"><td></td><th><label for="p5">Lens Length</label></th><td><input id="p5" value="50.0" disabled></td></tr>
              <tr><td></td><th><label for="p6">Rotation</label></th><td><input id="p6" value="0.0"></td></tr>
              <tr><td></td><th><label for="p7">X Location</label></th><td><input id="p7" value="-1616.159"></td></tr>
              <tr><td></td><th><label for="p8">Y Location</label></th><td><input id="p8" value="1188.827"></td></tr>
              <tr><td></td><th><label for="p9">Z Location</label></th><td><input id="p9" value="-4107.18"></td></tr>
              <tr><td></td><th><label for="p10">Distance to Target</label></th><td><input id="p10" class="shaded" value="4542.716" readonly></td></tr>
              <tr><td></td><th>Location</th><td><button class="place">Place...</button></td></tr>
              <tr class="group"><th colspan="3">Target</th></tr>
              <tr><td></td><th><label for="p11">X Target</label></th><td><input id="p11" value="-35.077"></td></tr>
              <tr><td></td><th><label for="p12">Y Target</label></th><td><input id="p12" value="1.717"></td></tr>
              <tr><td></td><th><label for="p13">Z Target</label></th><td><input id="p13" value="-17.288"></td></tr>
              <tr><td></td><th>Location</th><td><button class="place">Place...</button></td></tr>
              <tr class="group"><th colspan="3">Wallpaper</th></tr>
              <tr><td></td><th><label for="p14">Filename</label></th><td><div class="combo"><input id="p14" value="(none)"><button class="browse" aria-label="Browse">...</button></div></td></tr>
            </tbody>
          </table>
        </div>
        <div class="scroll"><svg><use href="#up"/></svg><i></i><svg><use href="#down"/></svg></div>
      </div>
    </div>
  </aside>
</main>

<div class="osnap">
  <label><input type="checkbox" checked>End</label><label><input type="checkbox" checked>Near</label><label><input type="checkbox" checked>Point</label><label><input type="checkbox" checked>Mid</label><label><input type="checkbox" checked>Cen</label><label><input type="checkbox" checked>Int</label><label><input type="checkbox" checked>Perp</label><label><input type="checkbox" checked>Tan</label><label><input type="checkbox" checked>Quad</label><label><input type="checkbox">Knot</label><label><input type="checkbox">Vertex</label><label><input type="checkbox" disabled>Project</label><label><input type="checkbox" disabled>Disable</label>
</div>

<footer class="statusbar">
  <button>CPlane</button><button>x -33.584</button><button>y 69.941</button><button>z 0.000</button><button>Millimeters</button><button class="layer"><i></i>Default</button><button>Grid Snap</button><button class="on">Ortho</button><button>Planar</button><button class="on">Osnap</button><button class="on">SmartTrack</button><button>Gumball</button><button>Record History</button><button>Filter</button><span>Memory use: 439 MB</span><span></span>
</footer>

<div class="taskbar">
  <button class="start" aria-label="Start"><svg viewBox="0 0 16 16"><path fill="#fff" d="M0 2 7 1V7.500H0ZM8 1 16 0V7.500H8ZM0 8.500H7V15L0 14ZM8 8.500H16V16L8 15Z"/></svg></button>
  <label class="search"><svg viewBox="0 0 22 22"><circle cx="11" cy="11" r="9" fill="none" stroke="#111" stroke-width="3"/></svg><input type="text" placeholder="Type here to search" aria-label="Type here to search"><svg class="mic" viewBox="0 0 12 18"><rect x="3.500" y="1" width="5" height="10" rx="2" fill="#222"/><path d="M1 7V12H11V7M6 12V16M3 16.500H9" fill="none" stroke="#333" stroke-width="1.200"/></svg></label>
  <div class="apps">
    <button aria-label="Task View"><svg viewBox="0 0 24 24"><path d="M4.500 4V7.500H14.500V4M4.500 20V17.500H14.500V20M4.500 10.500H14.500V14.500H4.500ZM18.500 5V20" fill="none" stroke="#fff" stroke-width="1.300"/><path d="M17 7H20V11H17Z" fill="#fff"/></svg></button>
    <button class="run" aria-label="Edge"><svg viewBox="0 0 24 24"><path d="M2 11C3 4 8 1 13 1c6 0 10 5 9.500 12.500H9C9.500 17 12 18.500 15 18.500c2.500 0 4.500-.7 6-1.600v4.600C19 22.500 16.500 23 14 23 8 23 4.500 19 4.500 14c0-3.500 2-6.500 5-8C5.500 6.500 3.500 8.500 2 11ZM9.200 9.800H16.500C16.500 7 15 5.500 13 5.500S9.500 7.500 9.200 9.800Z" fill="#0a7de0"/></svg></button>
    <button aria-label="Store"><svg viewBox="0 0 24 24"><path d="M8 7V4Q12-1 16 4V7" fill="none" stroke="#fff" stroke-width="1.500"/><path d="M1 6H23V22Q12 24 1 22Z" fill="#fff"/><path d="M7 9H11.500V14H7Z" fill="#f25022"/><path d="M12.500 9H17V14H12.500Z" fill="#7fba00"/><path d="M7 15H11.500V20H7Z" fill="#00a4ef"/><path d="M12.500 15H17V20H12.500Z" fill="#ffb900"/></svg></button>
    <button aria-label="Mail"><svg viewBox="0 0 24 24"><path d="M0 9 12 3 24 9V21H0Z" fill="#fff"/><path d="M1 9H23L13 15 17 18Z" fill="#25272a"/></svg></button>
    <button aria-label="Chrome"><svg viewBox="0 0 24 24"><use href="#chrome" x="1" y="1" width="22" height="22"/></svg></button>
    <button aria-label="Illustrator"><svg viewBox="0 0 24 24"><path d="M2 1.500H22V20.500H2Z" fill="#2a0d02" stroke="#f47b20" stroke-width="1.500"/><text x="6" y="15" class="ai">Ai</text></svg></button>
    <button class="run" aria-label="Chrome profile"><svg viewBox="0 0 24 24"><use href="#chrome" x="1" y="1" width="21" height="21"/><circle cx="16.500" cy="17" r="7" fill="#d9dde2"/><circle cx="16.500" cy="15" r="3" fill="#a9785a"/><path d="M13.500 14Q13.500 10.500 16.500 10.500T19.500 14Q16 12 13.500 14Z" fill="#222"/><path d="M11.500 22Q12 18.500 16.500 18.500T21.500 22Q16.500 26 11.500 22Z" fill="#fff"/></svg></button>
    <button class="run" aria-label="File Explorer"><svg viewBox="0 0 24 24"><path d="M1 4V2H9L11 4H22V21H1Z" fill="#f5c84a"/><path d="M1 6H22V20H1Z" fill="#ffe594"/><path d="M5 21V13.500Q5 12 6.500 12H17Q18.500 12 18.500 13.500V21H15V16H8.500V21Z" fill="#34a5de"/></svg></button>
    <button class="run" aria-label="Notepad"><svg viewBox="0 0 24 24"><path d="M8 3 21 2 22 19 18 22 2 21Z" fill="#dfe6e8"/><path d="M8 3 21 2 17 20 2 19Z" fill="url(#aqua)"/><path d="M8 3 20 2" stroke="#ddd" stroke-width="2" stroke-dasharray="1 1"/></svg></button>
    <button class="run" aria-label="Inventor"><svg viewBox="0 0 24 24"><path d="M0 1H24V23H0Z" fill="#f2d3ac"/><path d="M0 1H12L0 14Z" fill="#fae8cf"/><path d="M7 4H17V7H14V17H17V20H7V17H10V7H7Z" fill="#a85f20"/></svg></button>
    <button class="run active" aria-label="Rhinoceros"><svg viewBox="0 0 24 24"><use href="#rhino" width="24" height="24"/></svg></button>
  </div>
  <div class="tray">
    <svg class="t-help" viewBox="0 0 24 24"><circle cx="12" cy="12" r="10" fill="#0b93dc" stroke="#fff" stroke-width="2"/><path d="M8.500 9.500C8.500 4.500 15.500 5 15.500 9 15.500 12 12 11.500 12 14.500" fill="none" stroke="#fff" stroke-width="2.500"/><circle cx="12" cy="18" r="1.500" fill="#fff"/></svg>
    <svg class="t-people" viewBox="0 0 16 16"><g fill="none" stroke="#fff" stroke-width="1.200"><circle cx="11" cy="4" r="2.600"/><circle cx="6" cy="7.500" r="2.600"/><path d="M1.500 15Q2 10.500 6 10.500T9.500 14M9 7Q14 6.500 15 11"/></g></svg>
    <svg class="t-chevron" viewBox="0 0 16 16"><path d="M2 11 8 5 14 11" fill="none" stroke="#fff" stroke-width="1.300"/></svg>
    <svg class="t-cloud" viewBox="0 0 18 16"><path d="M2 12Q-1 7 4 6.500 5 2 9.500 3 12 4 12 6.500 8 6 7 9 4 10 5 13ZM6 13Q5 9.500 8.500 9.500 10 6.500 13.500 8 17.500 9 16.500 13Z" fill="#fff"/></svg>
    <svg class="t-battery" viewBox="0 0 18 16"><path d="M7 4.500H16.500V12.500H5V10M2 2V5M5 2V5M1 5H6V7Q6 9 3.500 9T1 7ZM3.500 9V12.500" fill="none" stroke="#fff" stroke-width="1.200"/><path d="M8 6.500H14V10.500H8Z" fill="#fff"/></svg>
    <svg class="t-wifi" viewBox="0 0 18 18"><g fill="none" stroke="#ccc" stroke-width="1.300"><path d="M3 12Q6 4 16 3M6 13Q9 7 16 6.500M9 14Q11 10 16 9.800M12 15Q13 13 16 13"/></g><path d="M5 8 10 17H0Z" fill="#ffc20e"/><path d="M5 11V14M5 15V16" stroke="#222" stroke-width="1.200"/></svg>
    <span class="lang">ENG</span>
    <div class="clock"><span>14:09</span><span>04-02-2019</span></div>
    <div class="notif"><svg viewBox="0 0 20 20"><path d="M1 2H17V14H8L5 18V14H1Z" fill="#fff"/><path d="M4 5.500H14M4 8.500H14M4 11.500H11" stroke="#25272a"/></svg><b>22</b></div>
  </div>
</div>
</body>
</html>
```
FILE: styles.css
```css
:root {
  --chrome: #eaebf0;
  --line: #bfc7dc;
  --tab: #d9d9d9;
}
* { box-sizing: border-box; }
body {
  margin: 0;
  height: 100vh;
  display: flex;
  flex-direction: column;
  overflow: hidden;
  background: var(--chrome);
  color: #000;
  font: 11px/15px "Noto Sans", "Open Sans", sans-serif;
}
button, input, select {
  font: inherit;
  color: inherit;
  border: 0;
  padding: 0;
  margin: 0;
  background: none;
  border-radius: 0;
}
input, select { outline: none; min-width: 0; }
button { white-space: nowrap; }
p, h1 { margin: 0; font-size: inherit; font-weight: normal; }
svg { display: block; }
.defs { position: absolute; width: 0; height: 0; }

/* title and menus */
.titlebar { display: flex; align-items: center; height: 22px; padding-left: 2px; background: #fff; }
.app-icon { width: 16px; height: 16px; }
.title { margin-left: 5px; flex: 1; }
.window-buttons { display: flex; padding-right: 1px; }
.window-buttons button { width: 46px; height: 22px; padding-bottom: 2px; display: grid; place-items: center; }
.window-buttons svg { width: 12px; height: 12px; fill: none; stroke: #000; }
.six { font: 20px "Noto Sans", sans-serif; fill: #fff; }
.menubar {
  display: grid;
  grid-template-columns: 32px 34px 39px 45px 53px 40px 43px 71px 68px 42px 55px 51px 48px auto;
  justify-content: start;
  height: 20px;
  padding: 0 7px;
  background: #fff;
}
.menubar button { text-align: left; }

/* command history */
.command-area { margin: 4px 2px 0 3px; padding-left: 1px; border-left: 3px double var(--line); background: #fff; }
.history { display: flex; height: 52px; border-bottom: 1px solid var(--line); }
.history-lines { flex: 1; display: flex; flex-direction: column; justify-content: flex-end; overflow: hidden; padding-left: 1px; white-space: nowrap; }
.history-lines p { flex: none; }
.scroll { width: 15px; display: flex; flex-direction: column; background: #f0f0f0; }
.scroll svg { width: 15px; height: 17px; flex: none; }
.scroll i { flex: 1; background: #cdcdcd; }
.prompt { display: flex; height: 18px; padding-left: 1px; line-height: 17px; }
.prompt label { font-weight: bold; }
.prompt input { flex: 1; margin: 1px 0 0 4px; height: 15px; border-left: 1px solid #000; }
.spin { width: 14px; }
.spin button { display: block; width: 14px; height: 9px; border: 1px solid #999; background: #f0f0f0; }
.spin svg { width: 12px; height: 6px; }

/* command toolbar tabs */
.toolbar-tabs {
  display: grid;
  grid-template-columns: 69px 64px 65px 59px 52px 107px 65px 75px 83px 91px 78px 82px 88px 64px 73px 1fr;
  height: 23px;
  margin-top: 2px;
  padding: 5px 2px 0 6px;
  border-top: 1px solid #d5d8e2;
  border-bottom: 1px solid var(--line);
}
.toolbar-tabs button {
  position: relative;
  padding-left: 10px;
  text-align: left;
  line-height: 16px;
  z-index: 0;
}
.toolbar-tabs button::before,
.toolbar-tabs button::after {
  content: "";
  position: absolute;
  top: 0;
  bottom: 0;
  background: var(--tab);
  border: solid var(--line);
  z-index: -1;
}
.toolbar-tabs button::before { left: -1px; width: 16px; border-width: 1px 0 0 1px; transform: skewX(-35deg); }
.toolbar-tabs button::after { left: 10px; right: 0; border-width: 1px 1px 0 0; border-radius: 0 4px 0 0; }
.toolbar-tabs .on { z-index: 1; margin-bottom: -1px; padding-left: 11px; }
.toolbar-tabs .on::before, .toolbar-tabs .on::after { background: var(--chrome); }
.toolbar-tabs .on::before { left: 5px; }
.gear-icon { width: 16px; height: 16px; color: #999; justify-self: end; }

.toolbar { display: flex; height: 38px; padding-left: 6px; }
.tool { position: relative; flex: none; width: 28px; height: 28px; }
.tool svg { width: 28px; height: 28px; overflow: visible; }
.more::after {
  content: "";
  position: absolute;
  right: 0;
  bottom: 0;
  width: 6px;
  height: 6px;
  background: #777;
  clip-path: polygon(100% 0, 100% 100%, 0 100%);
}

/* main work area */
.workspace { flex: 1; min-height: 0; display: flex; }
.sidebar {
  display: grid;
  grid-template-columns: 28px 28px;
  grid-auto-rows: 28px;
  align-content: start;
  width: 64px;
  margin-top: 3px;
  position: relative;
  padding-top: 4px;
}
.sidebar::before { content: ""; position: absolute; top: 0; left: 3px; width: 55px; height: 3px; border: 1px solid var(--line); border-width: 1px 0; }
.viewport-column { flex: 1; min-width: 0; display: flex; flex-direction: column; }
.viewport { position: relative; flex: 1; min-height: 0; border: 1px solid var(--line); border-right-width: 2px; background: #9da3aa; overflow: hidden; }
.scene { width: 100%; height: 100%; }
.axis-labels { font: 15px "DejaVu Sans", sans-serif; fill: #62676d; }
.viewport-title { position: absolute; top: 0; left: 0; height: 17px; display: flex; align-items: center; padding-left: 7px; background: #8ba5c5; font-size: 12px; }
.viewport-title span { margin-left: 5px; border-left: 1px solid #000; height: 15px; display: grid; place-items: center; }
.viewport-title svg { width: 10px; height: 10px; }
.view-tabs { display: grid; grid-template-columns: 74px 35px 44px 43px 50px 51px 26px; height: 20px; margin-top: 1px; margin-bottom: 4px; }
.view-tabs button {
  position: relative;
  z-index: 0;
  padding-left: 10px;
  text-align: left;
  background: var(--tab);
  border: 1px solid var(--line);
  border-width: 0 1px 1px 0;
  border-radius: 0 0 4px 0;
  line-height: 16px;
}
.view-tabs button::before {
  content: "";
  position: absolute;
  inset: 0 auto -1px -1px;
  width: 10px;
  border-left: 1px solid var(--line);
  background: linear-gradient(to top right, var(--chrome) 49%, var(--line) 50%, transparent 54%);
  z-index: -1;
}
.view-tabs .on { background: var(--chrome); }
.view-tabs .add svg { width: 10px; height: 10px; }

/* properties panel */
.panel { width: 332px; padding-left: 6px; margin-bottom: 8px; display: flex; flex-direction: column; }
.panel::before { content: ""; height: 3px; margin-top: 4px; margin-bottom: 1px; border: 1px solid var(--line); border-width: 1px 0; }
.panel-tabs { display: grid; grid-template-columns: 50px 50px 50px 51px 51px 58px 1fr; height: 20px; }
.panel-tabs button {
  display: flex;
  align-items: center;
  padding-left: 5px;
  font-size: 12px;
  background: linear-gradient(to right, var(--line) 1px, transparent 1px), linear-gradient(var(--line) 1px, transparent 1px), var(--tab);
  border-radius: 4px 0 0 0;
  clip-path: polygon(0 0, 80% 0, 100% 100%, 0 100%);
}
.panel-tabs .on { background-color: #f7f7fa; }
.panel-tabs button svg { width: 15px; height: 15px; margin-right: 3px; flex: none; }
.panel-tabs .gear-icon { margin-top: 3px; }
.faded { color: #bbb; }
.panel-body { flex: 1; min-height: 0; display: flex; flex-direction: column; padding: 3px 2px 0 3px; border: 1px solid var(--line); border-right: 0; background: #f7f7fa; }
.panel-modes { display: flex; gap: 4px; padding-bottom: 3px; }
.panel-modes button { width: 26px; height: 26px; padding: 1px; border: 1px solid #bbb; }
.panel-modes .on { border-color: #0a5a9c; background: #b4cde8; }
.panel-modes svg { width: 22px; height: 22px; }
.prop-area { flex: 1; min-height: 0; display: flex; justify-content: space-between; padding-right: 3px; }
.prop-scroll { flex: 1; margin-right: 4px; overflow: hidden; border: 1px solid #e6e7ec; border-bottom: 0; }
.props { width: 100%; border-collapse: collapse; table-layout: fixed; }
.c-indent { width: 18px; }
.c-label { width: 130px; }
.props td, .props th { height: 21px; padding: 0; text-align: left; font-weight: normal; border-bottom: 1px solid #e8e9ee; }
.props tr:not(.group) th { padding-left: 4px; background: #fff; border-right: 1px solid #e8e9ee; }
.props td + th + td { background: #fff; }
.props .group th { height: 26px; padding: 0 0 1px 3px; font-size: 13px; }
.props input, .props select { display: block; width: 100%; height: 20px; padding-left: 4px; appearance: none; }
.props .off { color: #777; }
.props .off input, .props .shaded { background: var(--chrome); }
.combo { display: flex; }
.combo select, .combo input { flex: 1; padding-left: 2px; }
.combo span, .browse { width: 20px; height: 20px; display: grid; place-items: center; background: #e1e1e1; border: 1px solid #adadad; }
.combo svg { width: 12px; height: 12px; }
.props .browse { line-height: 12px; }
.place { display: block; width: calc(100% - 1px); height: 19px; margin-left: 1px; line-height: 15px; background: #e1e1e1; border: 1px solid #adadad; }
.prop-area .scroll i { margin-bottom: 40px; }

/* object snaps and status */
.osnap {
  display: grid;
  grid-template-columns: 43px 48px 51px 44px 44px 37px 47px 43px 52px 48px 56px 68px auto;
  justify-content: start;
  align-items: center;
  height: 22px;
  margin-left: 2px;
  padding-left: 4px;
  border-left: 3px double var(--line);
}
.osnap label { display: flex; align-items: center; gap: 3px; }
.osnap input { appearance: none; width: 13px; height: 13px; border: 1px solid #333; background: #fff; display: grid; place-items: center; }
.osnap input:checked::before { content: ""; width: 9px; height: 4px; border: 1px solid #222; border-width: 0 0 1px 1px; transform: translateY(-1px) rotate(-45deg); }
.osnap input:disabled { border-color: #bbb; background: #e6e6e6; }
.statusbar {
  display: grid;
  grid-template-columns: 49px 88px 88px 88px 89px 168px 65px 45px 47px 48px 73px 59px 92px 40px 1fr 8px;
  height: 20px;
  border-top: 1px solid var(--line);
}
.statusbar > * { border-right: 1px solid var(--line); line-height: 18px; }
.statusbar > :last-child { border: 0; }
.statusbar .on { font-weight: bold; background: #dff0fb; }
.layer { display: flex; align-items: center; gap: 2px; }
.layer i { width: 14px; height: 14px; margin-left: 2px; background: #000; }
.statusbar span { padding-left: 2px; }

/* taskbar */
.taskbar { display: flex; height: 40px; background: #26282c; color: #fff; }
.start { width: 48px; display: grid; place-items: center; }
.start svg { width: 16px; height: 16px; }
.search { width: 344px; display: flex; align-items: center; padding: 0 12px 0 8px; background: #f2f2f2; color: #444; }
.search svg { width: 22px; height: 22px; }
.search input { flex: 1; margin-left: 10px; font-size: 14px; }
.search input::placeholder { color: #444; opacity: 1; }
.search .mic { width: 16px; height: 20px; }
.apps { display: flex; }
.apps button { width: 49px; height: 40px; padding: 8px 0 5px; display: grid; justify-items: center; position: relative; }
.apps button:first-child { width: 50px; }
.apps svg { width: 24px; height: 24px; }
.apps .run::after { content: ""; position: absolute; left: 4px; right: 4px; bottom: 0; height: 2px; background: #76b9ed; }
.apps .active { background: #55585c; }
.apps .active::after { left: 0; right: 0; }
.ai { font: bold 11px "Liberation Sans", sans-serif; fill: #f47b20; }
.tray { margin-left: auto; display: flex; align-items: center; gap: 8px; padding-right: 3px; }
.t-help { width: 24px; height: 24px; margin-right: 16px; }
.t-people { width: 16px; height: 16px; margin-right: 12px; }
.t-chevron { width: 14px; height: 14px; }
.t-cloud, .t-battery, .t-wifi { width: 17px; height: 17px; }
.clock { display: grid; justify-items: center; width: 70px; line-height: 18px; }
.notif { position: relative; width: 42px; height: 40px; border-right: 1px solid #666; }
.notif svg { width: 20px; height: 20px; margin: 10px 0 0 4px; }
.notif b { position: absolute; left: 9px; top: 17px; width: 20px; height: 20px; border: 1px solid #999; border-radius: 50%; background: #33363a; text-align: center; line-height: 18px; font-weight: normal; }
```
